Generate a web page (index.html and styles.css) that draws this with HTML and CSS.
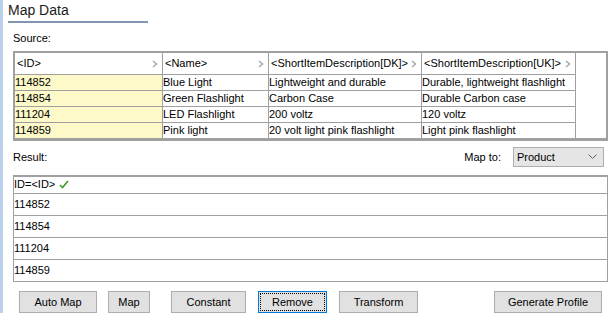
FILE: index.html
```html
<!DOCTYPE html>
<html lang="en">
<head>
    <meta charset="UTF-8">
    <title>Map Data</title>
    <link rel="stylesheet" href="styles.css">
</head>
<body>
<div class="page">
    <div class="title">Map Data</div>

    <div class="label">Source:</div>
    <div class="source">
        <table class="grid">
            <tr class="head">
                <td class="c-id"><span>&lt;ID&gt;</span><svg class="chev" width="6" height="8" viewBox="0 0 6 8"><polyline points="1,1 4.5,4 1,7" fill="none" stroke="#a8a8a8" stroke-width="1.5"/></svg></td>
                <td class="c-name"><span>&lt;Name&gt;</span><svg class="chev" width="6" height="8" viewBox="0 0 6 8"><polyline points="1,1 4.5,4 1,7" fill="none" stroke="#a8a8a8" stroke-width="1.5"/></svg></td>
                <td class="c-dk"><span>&lt;ShortItemDescription[DK]&gt;</span><svg class="chev" width="6" height="8" viewBox="0 0 6 8"><polyline points="1,1 4.5,4 1,7" fill="none" stroke="#a8a8a8" stroke-width="1.5"/></svg></td>
                <td class="c-uk"><span>&lt;ShortItemDescription[UK]&gt;</span><svg class="chev" width="6" height="8" viewBox="0 0 6 8"><polyline points="1,1 4.5,4 1,7" fill="none" stroke="#a8a8a8" stroke-width="1.5"/></svg></td>
            </tr>
            <tr><td class="key">114852</td><td>Blue Light</td><td>Lightweight and durable</td><td>Durable, lightweight flashlight</td></tr>
            <tr><td class="key">114854</td><td>Green Flashlight</td><td>Carbon Case</td><td>Durable Carbon case</td></tr>
            <tr><td class="key">111204</td><td>LED Flashlight</td><td>200 voltz</td><td>120 voltz</td></tr>
            <tr><td class="key">114859</td><td>Pink light</td><td>20 volt light pink flashlight</td><td>Light pink flashlight</td></tr>
        </table>
    </div>

    <div class="map-row">
        <div class="label-inline">Result:</div>
        <div class="map-to">
            <span>Map to:</span>
            <div class="select">
                <span>Product</span>
                <svg width="9" height="6" viewBox="0 0 9 6"><polyline points="0.5,0.5 4.5,4.5 8.5,0.5" fill="none" stroke="#606060" stroke-width="1"/></svg>
            </div>
        </div>
    </div>

    <div class="result">
        <div class="r-head">ID=&lt;ID&gt; <svg width="10" height="9" viewBox="0 0 10 9"><path d="M1 5 L3.5 7.5 L9 1" fill="none" stroke="#3f9a2e" stroke-width="1.6"/></svg></div>
        <div class="r-row">114852</div>
        <div class="r-row">114854</div>
        <div class="r-row">111204</div>
        <div class="r-row">114859</div>
    </div>

    <div class="buttons">
        <button class="btn b-auto">Auto Map</button>
        <button class="btn b-map">Map</button>
        <button class="btn b-const">Constant</button>
        <button class="btn b-remove">Remove</button>
        <button class="btn b-trans">Transform</button>
        <button class="btn b-gen">Generate Profile</button>
    </div>
</div>
</body>
</html>
```

FILE: styles.css
```css
body {
    margin: 0;
    background: #fff;
    font-family: "Liberation Sans", Arial, sans-serif;
    font-size: 11px;
    color: #000;
}
.page {
    height: 313px;
    box-sizing: border-box;
    border-left: 3px solid #b9d1ea;
    padding-left: 5px;
    overflow: hidden;
}
.title {
    width: 140px;
    height: 19px;
    padding-top: 2px;
    font-size: 14px;
    line-height: 17px;
    color: #1a1a1a;
    border-bottom: 2px solid #8195af;
}
.label {
    margin: 9px 0 0 5px;
    line-height: 13px;
}

/* source grid */
.source {
    margin: 6px 0 0 5px;
    width: 595px;
    height: 90px;
    box-sizing: border-box;
    border: 2px solid #a0a0a0;
    border-bottom-width: 3px;
    overflow: hidden;
}
.grid {
    border-collapse: collapse;
    table-layout: fixed;
    width: 561px;
}
.grid td {
    border: 1px solid #a0a0a0;
    height: 15px;
    padding: 0 1px 0 0;
    line-height: 15px;
    white-space: nowrap;
    overflow: hidden;
}
.grid tr:first-child td { border-top: none; }
.grid td:first-child { border-left: none; }
.grid .head td {
    height: 21px;
    position: relative;
}
.grid .head td span { padding-left: 2px; }
.chev {
    position: absolute;
    right: 4px;
    top: 7px;
}
.c-id { width: 146px; }
.c-name { width: 104px; }
.c-dk { width: 151px; }
.c-uk { width: 152px; }
.key { background: #fdf9c8; }

/* map to row */
.map-row {
    display: flex;
    justify-content: space-between;
    align-items: center;
    height: 22px;
    margin: 5px 7px 0 5px;
}
.map-to {
    display: flex;
    align-items: center;
    gap: 12px;
}
.select {
    width: 91px;
    height: 20px;
    box-sizing: border-box;
    border: 1px solid #adadad;
    background: #e5e5e5;
    display: flex;
    align-items: center;
    justify-content: space-between;
    padding: 0 6px 0 3px;
    font-size: 11px;
}

/* result grid */
.result {
    margin: 7px 0 0 5px;
    width: 595px;
    box-sizing: border-box;
    border: 1px solid #a0a0a0;
    border-top-width: 2px;
}
.r-head {
    height: 16px;
    line-height: 15px;
    border-bottom: 1px solid #a0a0a0;
}
.r-head svg { vertical-align: -1px; margin-left: 1px; }
.r-row {
    height: 21px;
    line-height: 20px;
    border-bottom: 1px solid #a0a0a0;
}
.r-row:last-child { border-bottom: none; }

/* buttons */
.buttons {
    display: flex;
    margin: 9px 0 0 11px;
}
.btn {
    height: 22px;
    box-sizing: border-box;
    border: 1px solid #adadad;
    background: #e1e1e1;
    font-family: "Liberation Sans", Arial, sans-serif;
    font-size: 11px;
    color: #000;
    padding: 0;
}
.b-auto { width: 78px; }
.b-map { width: 42px; margin-left: 11px; }
.b-const { width: 75px; margin-left: 21px; }
.b-remove {
    width: 69px;
    margin-left: 12px;
    border-color: #0078d7;
    outline: 1px dotted #000;
    outline-offset: -3px;
}
.b-trans { width: 79px; margin-left: 12px; }
.b-gen { width: 108px; margin-left: 76px; }
```
